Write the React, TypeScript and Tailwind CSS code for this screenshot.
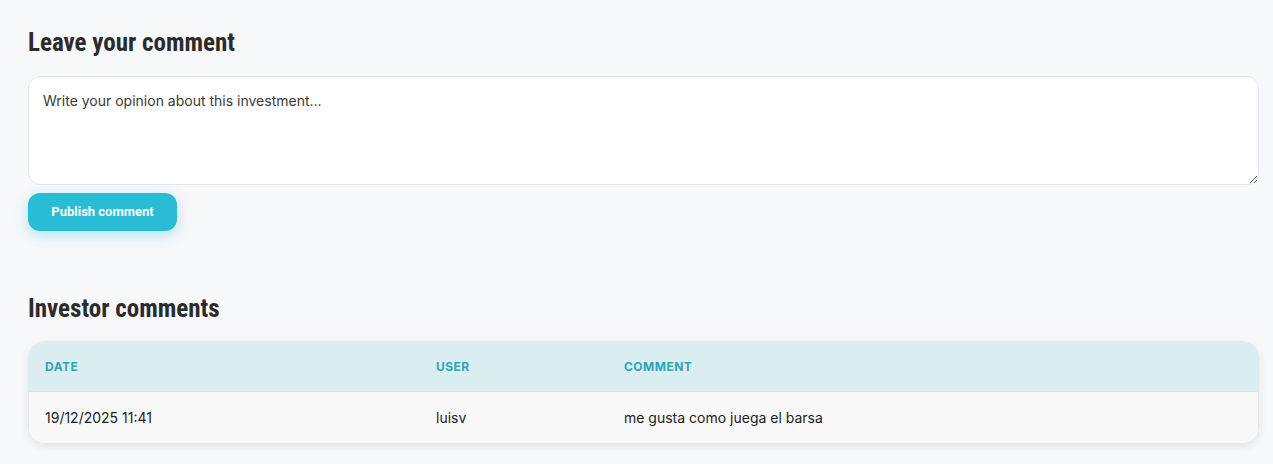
const COMMENTS = [
  { date: '19/12/2025 11:41', user: 'luisv', comment: 'me gusta como juega el barsa' },
];

export default function App() {
  return (
    <div className="w-full bg-[#f7f8fa] pl-7 pr-[14px] pt-[26px] pb-5 font-['Inter',sans-serif]">
      {/* Leave comment */}
      <h2 className="font-['Roboto',sans-serif] text-[25px] font-bold leading-[34px] text-[#2b2b2b] [font-stretch:condensed]">
        Leave your comment
      </h2>
      <textarea
        placeholder="Write your opinion about this investment..."
        className="mt-4 block h-[109px] w-full rounded-xl border border-[#e2e6ee] bg-white px-[14px] py-[14px] text-sm text-[#333] outline-none placeholder:text-[#3a3a3a]"
      />
      <button className="mt-2 h-[38px] w-[149px] rounded-xl bg-[#29bcd4] font-['Roboto',sans-serif] text-[13px] font-bold text-white shadow-[0_4px_14px_rgba(41,188,212,0.35)]">
        Publish comment
      </button>

      {/* Comments table */}
      <h2 className="mt-[61px] font-['Roboto',sans-serif] text-[25px] font-bold leading-[34px] text-[#2b2b2b] [font-stretch:condensed]">
        Investor comments
      </h2>
      <div className="mt-[15px] overflow-hidden rounded-2xl border border-[#e3e8ec] shadow-[0_3px_8px_rgba(0,0,0,0.08)]">
        <div className="grid h-[50px] grid-cols-[391px_188px_1fr] items-center border-b border-[#d3e6ea] bg-[#daeef2] text-xs font-bold uppercase tracking-[0.04em] text-[#2aa6b8]">
          <div className="pl-4">Date</div>
          <div className="pl-4">User</div>
          <div className="pl-4">Comment</div>
        </div>
        {COMMENTS.map((c, i) => (
          <div
            key={i}
            className="grid h-[51px] grid-cols-[391px_188px_1fr] items-center bg-[#f8f8f8] text-sm text-[#222]"
          >
            <div className="pl-4">{c.date}</div>
            <div className="pl-4">{c.user}</div>
            <div className="pl-4">{c.comment}</div>
          </div>
        ))}
      </div>
    </div>
  );
}
